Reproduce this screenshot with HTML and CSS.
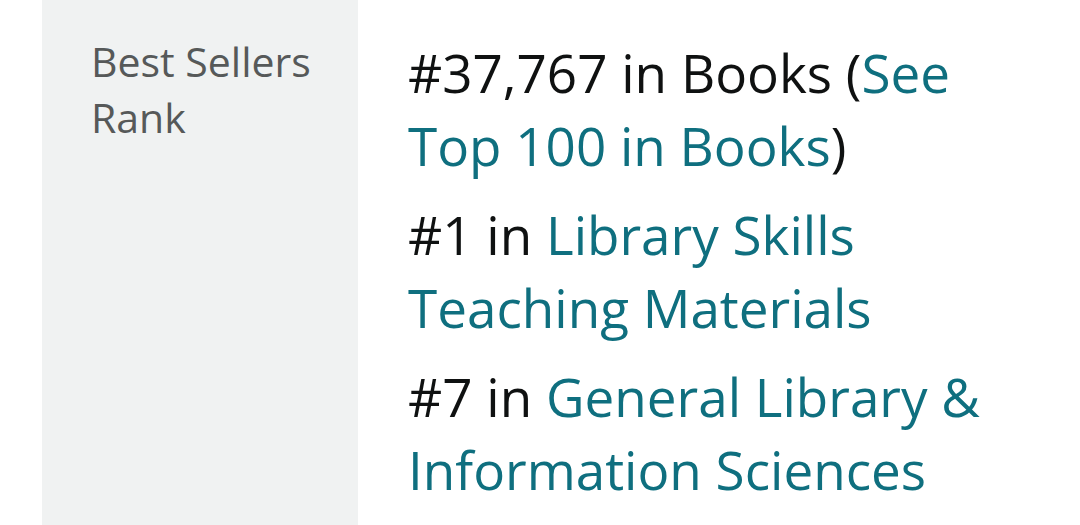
FILE: index.html
```html
<!DOCTYPE html>
<html>
<head>
<meta charset="utf-8">
<link rel="stylesheet" href="styles.css">
</head>
<body>
<div class="row">
  <div class="label">Best Sellers Rank</div>
  <div class="value">
    <ul class="ranks">
      <li>#37,767 in Books (<a href="#">See Top 100 in Books</a>)</li>
      <li>#1 in <a href="#">Library Skills Teaching Materials</a></li>
      <li>#7 in <a href="#">General Library &amp; Information Sciences</a></li>
    </ul>
  </div>
</div>
</body>
</html>
```
FILE: styles.css
```css
html, body {
  margin: 0;
  padding: 0;
  background: #ffffff;
}
body {
  font-family: "Open Sans", "Noto Sans", sans-serif;
  width: 1080px;
  height: 525px;
  overflow: hidden;
}
.row {
  display: flex;
  height: 525px;
  padding-left: 42px;
}
.label {
  width: 316px;
  flex: none;
  box-sizing: border-box;
  background: #f0f2f2;
  color: #565959;
  font-size: 41px;
  line-height: 56px;
  padding: 33px 10px 0 49px;
}
.value {
  padding: 36px 0 0 50px;
  width: 600px;
  flex: none;
}
.ranks {
  list-style: none;
  margin: 0;
  padding: 0;
  display: flex;
  flex-direction: column;
  gap: 16px;
  color: #0f1111;
  font-size: 53px;
  line-height: 73px;
}
.ranks a {
  color: #0f6f7f;
  text-decoration: none;
}
```
